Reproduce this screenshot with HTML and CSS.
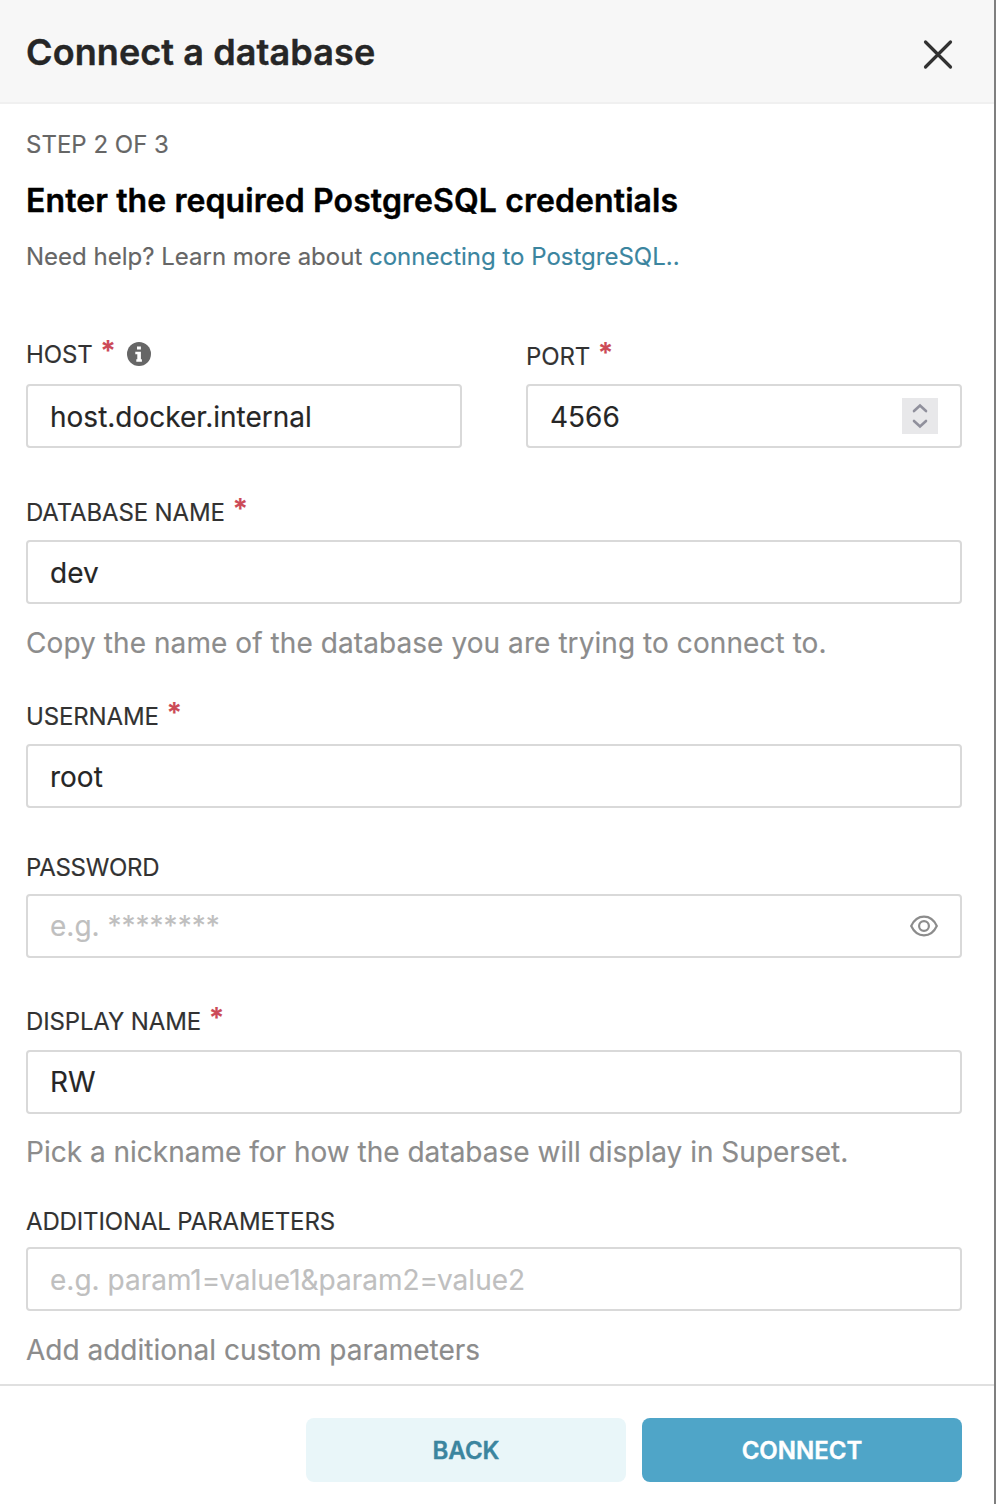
FILE: index.html
```html
<!DOCTYPE html>
<html lang="en">
<head>
<meta charset="utf-8">
<title>Connect a database</title>
<link rel="stylesheet" href="styles.css">
</head>
<body>
<div class="modal">
  <header class="modal-header">
    <h1 class="modal-title">Connect a database</h1>
    <svg class="close" viewBox="0 0 32 32" role="img" aria-label="Close"><path d="M3.500 4L28.500 29M28.500 4L3.500 29"/></svg>
  </header>
  <main class="modal-body">
    <p class="step">STEP 2 OF 3</p>
    <h2 class="heading">Enter the required PostgreSQL credentials</h2>
    <p class="intro">Need help? Learn more about <a class="link">connecting to PostgreSQL..</a></p>
    <form class="form">
      <div class="pair">
        <div class="field host">
          <div class="label"><span class="name">HOST</span><span class="required">*</span>
            <svg class="info" viewBox="0 0 24 24"><circle cx="12" cy="12" r="12"/><path d="M10 4.400h3.900v3.200H10zM8.300 9.700h5.600v7.500h1v2.500H9.300v-2.500h1v-5h-2z"/></svg>
          </div>
          <div class="input">host.docker.internal</div>
        </div>
        <div class="field port">
          <div class="label"><span class="name">PORT</span><span class="required">*</span></div>
          <div class="input"><span>4566</span>
            <svg class="stepper" viewBox="0 0 36 36"><path d="M12 13L18 7.500L24 13M12 23L18 28.500L24 23"/></svg>
          </div>
        </div>
      </div>
      <div class="field database">
        <div class="label"><span class="name">DATABASE NAME</span><span class="required">*</span></div>
        <div class="input">dev</div>
        <p class="help">Copy the name of the database you are trying to connect to.</p>
      </div>
      <div class="field username">
        <div class="label"><span class="name">USERNAME</span><span class="required">*</span></div>
        <div class="input">root</div>
      </div>
      <div class="field password">
        <div class="label"><span class="name">PASSWORD</span></div>
        <div class="input placeholder"><span>e.g. ********</span>
          <svg class="eye" viewBox="0 0 28 22"><path d="M1.200 11C4 5 8.500 1.700 14 1.700S24 5 26.800 11C24 17 19.500 20.300 14 20.300S4 17 1.200 11Z"/><circle cx="14" cy="11" r="4.900"/></svg>
        </div>
      </div>
      <div class="field display">
        <div class="label"><span class="name">DISPLAY NAME</span><span class="required">*</span></div>
        <div class="input">RW</div>
        <p class="help">Pick a nickname for how the database will display in Superset.</p>
      </div>
      <div class="field params">
        <div class="label"><span class="name">ADDITIONAL PARAMETERS</span></div>
        <div class="input placeholder">e.g. param1=value1&amp;param2=value2</div>
        <p class="help">Add additional custom parameters</p>
      </div>
    </form>
  </main>
  <footer class="modal-footer">
    <button class="button back">BACK</button>
    <button class="button connect">CONNECT</button>
  </footer>
</div>
</body>
</html>
```
FILE: styles.css
```css
* { box-sizing: border-box; }
body {
  margin: 0;
  background: #fff;
  font-family: Inter, "Liberation Sans", sans-serif;
  -webkit-text-stroke: .15px;
}
h1, h2, p { margin: 0; }
.modal {
  display: flex;
  flex-direction: column;
  width: 996px;
  height: 1504px;
  border-right: 2px solid #7f7f7f;
}
.modal-header {
  display: flex;
  align-items: center;
  justify-content: space-between;
  height: 104px;
  padding: 4px 40px 2px 26px;
  background: #f7f7f7;
  border-bottom: 2px solid #f0f0f0;
}
.modal-title {
  font-size: 36px;
  line-height: 48px;
  font-weight: 600;
  letter-spacing: .1px;
  color: #262626;
  -webkit-text-stroke: .4px;
}
.close {
  width: 32px;
  height: 32px;
  margin-top: 4px;
  fill: none;
  stroke: #323232;
  stroke-width: 3.200;
  stroke-linecap: round;
}
.modal-body {
  flex: 1;
  padding: 23px 32px 0 26px;
}
.step {
  font-size: 24px;
  line-height: 36px;
  color: #666;
}
.heading {
  margin-top: 14px;
  font-size: 32px;
  line-height: 48px;
  font-weight: 600;
  letter-spacing: .09px;
  color: #000;
  -webkit-text-stroke: .4px;
}
.intro {
  margin-top: 14px;
  font-size: 24px;
  line-height: 36px;
  color: #666;
}
.link { color: #3b859f; }
.form {
  display: flex;
  flex-direction: column;
  padding-top: 63px;
}
.pair {
  display: grid;
  grid-template-columns: 436px 436px;
  gap: 64px;
}
.label {
  display: flex;
  align-items: center;
  height: 32px;
  padding-top: 2px;
  font-size: 24px;
  line-height: 32px;
  color: #323232;
}
.name { letter-spacing: -.14px; }
.required {
  margin: 0 0 8px 8px;
  font-size: 28px;
  font-weight: 600;
  color: #cc4a57;
}
.info {
  width: 24px;
  height: 24px;
  margin: -2px 0 0 11px;
  fill: #666;
}
.info path { fill: #fff; }
.input {
  display: flex;
  align-items: center;
  justify-content: space-between;
  height: 64px;
  padding: 2px 22px 0;
  border: 2px solid #d9d9d9;
  border-radius: 4px;
  font-size: 28px;
  line-height: 40px;
  color: #262626;
}
.placeholder { color: #bfbfbf; }
.host .input, .port .input { margin-top: 14px; }
.port .label { height: 34px; padding-top: 4px; }
.port .input { margin-top: 12px; }
.stepper {
  width: 36px;
  height: 36px;
  margin-top: -2px;
  background: #e8e8ea;
  fill: none;
  stroke: #90909c;
  stroke-width: 2.600;
  stroke-linecap: round;
}
.eye {
  width: 28px;
  height: 22px;
  fill: none;
  stroke: #8c8c8c;
  stroke-width: 2.200;
}
.help {
  margin-top: 19px;
  font-size: 28px;
  line-height: 40px;
  color: #8c8c8c;
}
.database .help { letter-spacing: .07px; }
.database { margin-top: 48px; }
.database .input, .username .input { margin-top: 12px; }
.username { margin-top: 37px; }
.password { margin-top: 43px; }
.password .name { letter-spacing: -.3px; }
.password .input { margin-top: 11px; padding-top: 0; }
.display { margin-top: 47px; }
.display .input { margin-top: 13px; padding-top: 0; }
.display .help { margin-top: 18px; }
.params { margin-top: 33px; }
.params .input { margin-top: 10px; }
.modal-footer {
  display: flex;
  justify-content: flex-end;
  gap: 16px;
  height: 120px;
  padding: 32px 32px 0;
  border-top: 2px solid #e0e0e0;
}
.button {
  width: 320px;
  height: 64px;
  padding: 2px 0 0;
  border: 0;
  border-radius: 8px;
  font: 600 24px/36px Inter, "Liberation Sans", sans-serif;
  -webkit-text-stroke: .4px;
}
.back { background: #e9f6f9; color: #3b859f; }
.connect { background: #4fa5c8; color: #fff; }
```
